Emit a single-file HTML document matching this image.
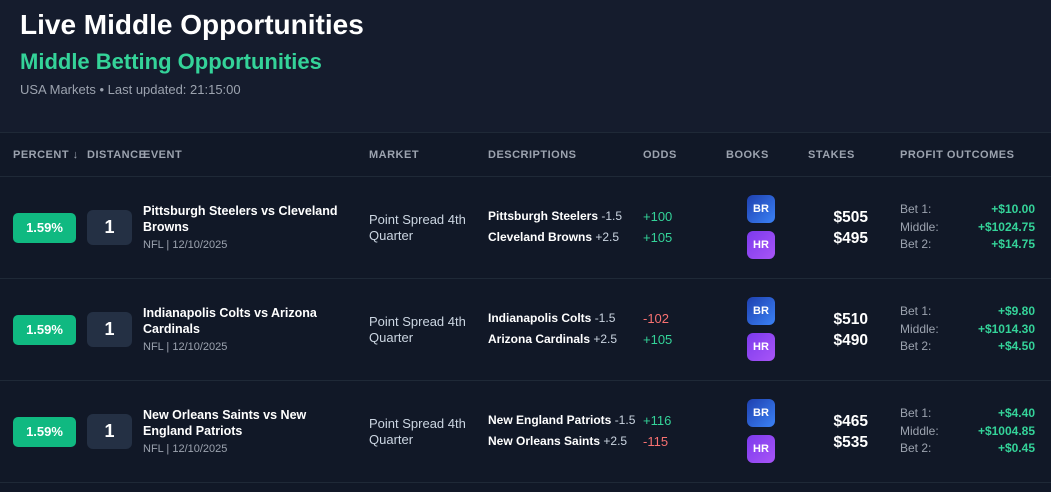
<!DOCTYPE html>
<html><head><meta charset="utf-8"><style>
*{margin:0;padding:0;box-sizing:border-box}
body{width:1051px;height:492px;background:#111827;font-family:"Liberation Sans",Arial,sans-serif;color:#fff;position:relative;overflow:hidden}
.hdr{position:absolute;left:0;top:0;width:1051px;height:133px;background:#151c2d;border-bottom:1px solid #1f2937}
.a{position:absolute;white-space:nowrap}
.th{top:149px;font-size:11px;font-weight:bold;color:#9ca3af;letter-spacing:.5px}
.line{position:absolute;left:0;width:1051px;height:1px;background:#1f2937}
.pct{position:absolute;left:13px;width:63px;height:30px;background:#10b981;border-radius:5px;font-size:13px;font-weight:bold;text-align:center;line-height:30px}
.dist{position:absolute;left:87px;width:45px;height:35px;background:#243044;border-radius:6px;font-size:18px;font-weight:bold;text-align:center;line-height:35px}
.ev{left:143px;font-size:12.5px;font-weight:bold;line-height:16px;white-space:normal;width:215px}
.sub{font-size:11px;color:#9ca3af;font-weight:normal;margin-top:2px}
.mk{left:369px;font-size:13px;color:#cbd5e1;line-height:16px;white-space:normal;width:110px}
.ds{left:488px;font-size:12px;font-weight:bold;line-height:21px}
.ds span{font-weight:normal;color:#cbd5e1}
.od{left:643px;font-size:13px;line-height:21px}
.g{color:#34d399}.r{color:#f87171}
.bk{position:absolute;left:747px;width:28px;height:28px;border-radius:6px;font-size:11px;font-weight:bold;text-align:center;line-height:28px}
.br{background:linear-gradient(135deg,#1e40af,#3b82f6)}
.hr{background:linear-gradient(135deg,#7c3aed,#a855f7)}
.st{left:808px;width:60px;text-align:right;font-size:15.5px;font-weight:bold;line-height:21px}
.pf{left:900px;width:135px;font-size:12px;line-height:17.5px;color:#9ca3af}
.pf div{display:flex;justify-content:space-between}
.pf b{color:#34d399}
</style></head><body>
<div class="hdr"></div>
<div class="a" style="left:20px;top:9px;font-size:28px;font-weight:bold">Live Middle Opportunities</div>
<div class="a" style="left:20px;top:49px;font-size:22px;font-weight:bold;color:#34d399">Middle Betting Opportunities</div>
<div class="a" style="left:20px;top:82px;font-size:13px;color:#9ca3af">USA Markets • Last updated: 21:15:00</div>

<div class="a th" style="left:13px">PERCENT ↓</div>
<div class="a th" style="left:87px">DISTANCE</div>
<div class="a th" style="left:143px">EVENT</div>
<div class="a th" style="left:369px">MARKET</div>
<div class="a th" style="left:488px">DESCRIPTIONS</div>
<div class="a th" style="left:643px">ODDS</div>
<div class="a th" style="left:726px">BOOKS</div>
<div class="a th" style="left:808px">STAKES</div>
<div class="a th" style="left:900px">PROFIT OUTCOMES</div>
<div class="line" style="top:176px"></div>
<div class="line" style="top:278px"></div>
<div class="line" style="top:380px"></div>
<div class="line" style="top:482px"></div>

<!-- row 1 -->
<div class="pct" style="top:213px">1.59%</div>
<div class="dist" style="top:210px">1</div>
<div class="a ev" style="top:203px">Pittsburgh Steelers vs Cleveland Browns<div class="sub">NFL | 12/10/2025</div></div>
<div class="a mk" style="top:212px">Point Spread 4th Quarter</div>
<div class="a ds" style="top:206px">Pittsburgh Steelers <span>-1.5</span><br>Cleveland Browns <span>+2.5</span></div>
<div class="a od" style="top:206px"><span class="g">+100</span><br><span class="g">+105</span></div>
<div class="bk br" style="top:195px">BR</div><div class="bk hr" style="top:231px">HR</div>
<div class="a st" style="top:207px">$505<br>$495</div>
<div class="a pf" style="top:201px"><div>Bet 1:<b>+$10.00</b></div><div>Middle:<b>+$1024.75</b></div><div>Bet 2:<b>+$14.75</b></div></div>

<!-- row 2 -->
<div class="pct" style="top:315px">1.59%</div>
<div class="dist" style="top:312px">1</div>
<div class="a ev" style="top:305px">Indianapolis Colts vs Arizona Cardinals<div class="sub">NFL | 12/10/2025</div></div>
<div class="a mk" style="top:314px">Point Spread 4th Quarter</div>
<div class="a ds" style="top:308px">Indianapolis Colts <span>-1.5</span><br>Arizona Cardinals <span>+2.5</span></div>
<div class="a od" style="top:308px"><span class="r">-102</span><br><span class="g">+105</span></div>
<div class="bk br" style="top:297px">BR</div><div class="bk hr" style="top:333px">HR</div>
<div class="a st" style="top:309px">$510<br>$490</div>
<div class="a pf" style="top:303px"><div>Bet 1:<b>+$9.80</b></div><div>Middle:<b>+$1014.30</b></div><div>Bet 2:<b>+$4.50</b></div></div>

<!-- row 3 -->
<div class="pct" style="top:417px">1.59%</div>
<div class="dist" style="top:414px">1</div>
<div class="a ev" style="top:407px">New Orleans Saints vs New England Patriots<div class="sub">NFL | 12/10/2025</div></div>
<div class="a mk" style="top:416px">Point Spread 4th Quarter</div>
<div class="a ds" style="top:410px">New England Patriots <span>-1.5</span><br>New Orleans Saints <span>+2.5</span></div>
<div class="a od" style="top:410px"><span class="g">+116</span><br><span class="r">-115</span></div>
<div class="bk br" style="top:399px">BR</div><div class="bk hr" style="top:435px">HR</div>
<div class="a st" style="top:411px">$465<br>$535</div>
<div class="a pf" style="top:405px"><div>Bet 1:<b>+$4.40</b></div><div>Middle:<b>+$1004.85</b></div><div>Bet 2:<b>+$0.45</b></div></div>
</body></html>
